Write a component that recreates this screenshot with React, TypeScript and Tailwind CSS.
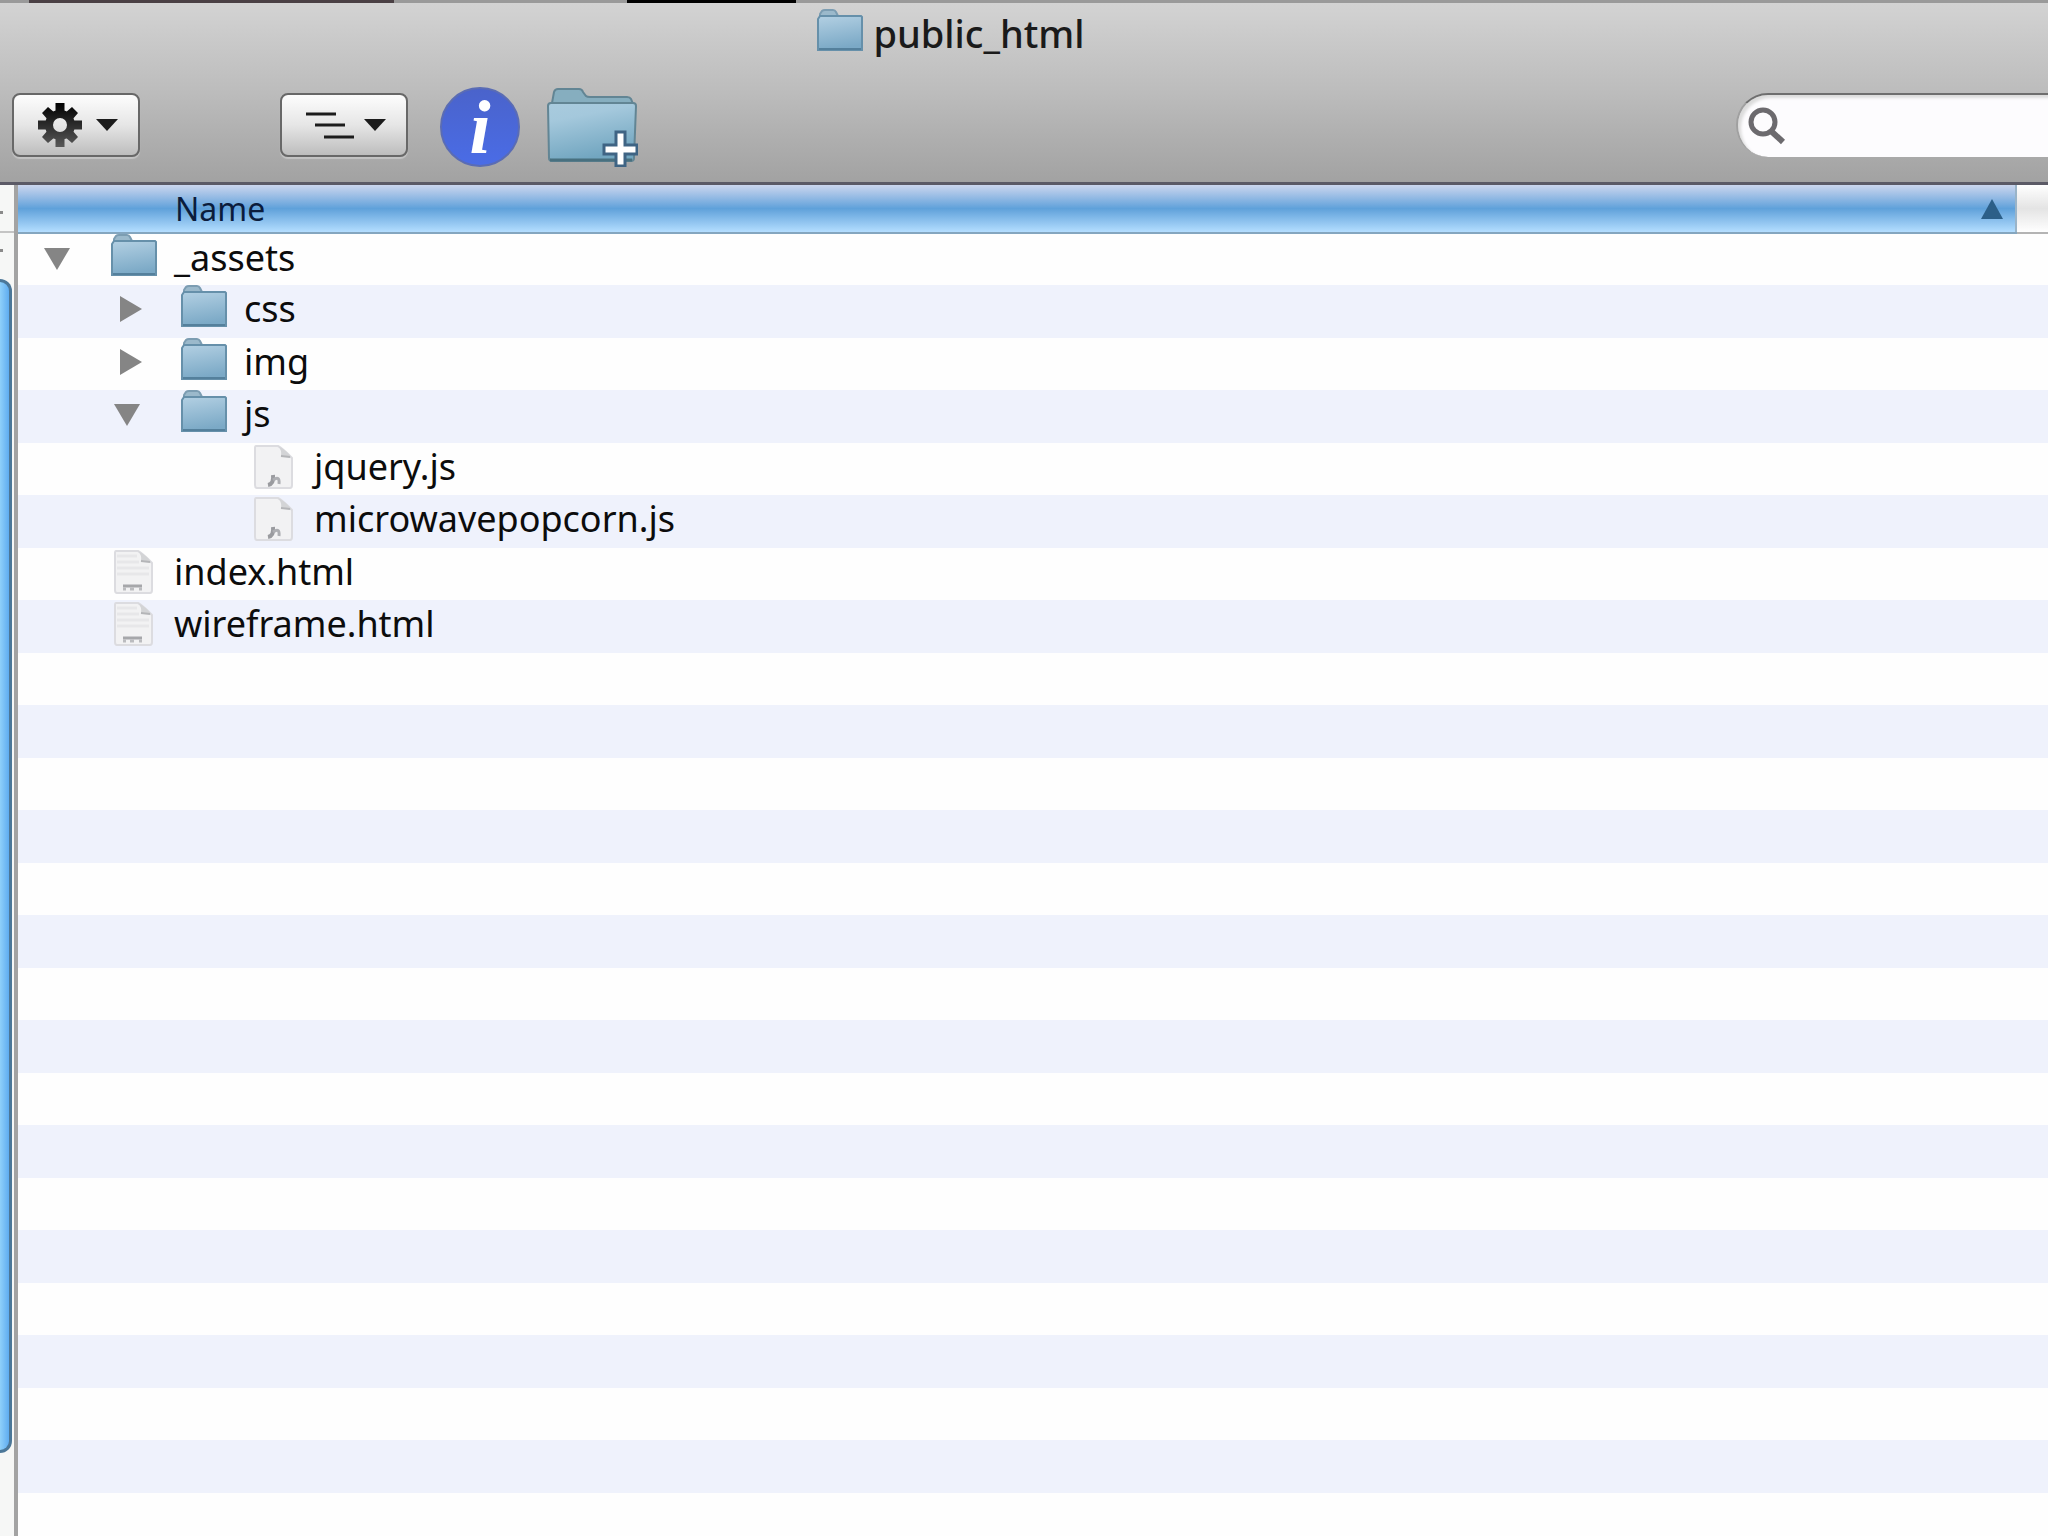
import { useState } from 'react'

type Entry = {
  id: string
  name: string
  kind: 'folder' | 'js' | 'html'
  depth: 0 | 1 | 2
  parent?: string
}

const ENTRIES: Entry[] = [
  { id: 'assets', name: '_assets', kind: 'folder', depth: 0 },
  { id: 'css', name: 'css', kind: 'folder', depth: 1, parent: 'assets' },
  { id: 'img', name: 'img', kind: 'folder', depth: 1, parent: 'assets' },
  { id: 'js', name: 'js', kind: 'folder', depth: 1, parent: 'assets' },
  { id: 'jquery', name: 'jquery.js', kind: 'js', depth: 2, parent: 'js' },
  { id: 'popcorn', name: 'microwavepopcorn.js', kind: 'js', depth: 2, parent: 'js' },
  { id: 'index', name: 'index.html', kind: 'html', depth: 0 },
  { id: 'wireframe', name: 'wireframe.html', kind: 'html', depth: 0 },
]

const ROW_COUNT = 24

const INDENT = ['pl-[26px]', 'pl-[96px]', 'pl-[166px]']

function FolderIcon() {
  return (
    <svg viewBox="0 0 46 42" className="h-[42px] w-[46px] shrink-0" aria-hidden="true">
      <defs>
        <linearGradient id="folder" x1="0" y1="0" x2="0.2" y2="1">
          <stop offset="0" stopColor="#b3d0e3" />
          <stop offset="1" stopColor="#7ba9c6" />
        </linearGradient>
      </defs>
      <path d="M3 9 V5 L5 2 Q6 1 8 1 H16 Q18 1 19 3 L21 7 V9 Z" fill="#9bb9cb" stroke="#7c9db2" strokeWidth="2" />
      <path d="M1 10 L3 7 H44 L45 8 V41 H1 Z" fill="url(#folder)" stroke="#6690aa" strokeWidth="2" />
      <path d="M2 40 H44" stroke="#54809c" strokeWidth="2" />
    </svg>
  )
}

function FileIcon({ kind }: { kind: 'js' | 'html' }) {
  return (
    <svg viewBox="0 0 46 46" className="h-[46px] w-[46px] shrink-0" aria-hidden="true">
      <path d="M5 3 H27 Q31 5 41 15 V42 Q41 45 39 45 H6 Q4 45 4 42 V5 Q4 3 5 3 Z" fill="#f2f2f3" stroke="#dcdce0" strokeWidth="2" />
      <path d="M27 3 Q31 7 30 13 Q37 12 41 16 Q37 8 27 3 Z" fill="#d3d4d6" />
      <path d="M30 13 L39 14" stroke="#b4b5b8" strokeWidth="2" />
      {kind === 'js' ? (
        <>
          <path d="M17 42 Q23 41 22 32" fill="none" stroke="#9a9b9f" strokeWidth="4" />
          <path d="M22 37 Q29 32 28 41" fill="none" stroke="#adaeb2" strokeWidth="3" />
        </>
      ) : (
        <>
          <path d="M6 8 H26 M6 14 H28 M6 20 H38 M6 26 H38" stroke="#e7e7e9" strokeWidth="3" />
          <path d="M12 38 H31" stroke="#a6a7aa" strokeWidth="3" />
          <path d="M12 41 H15 M19 41 H23 M28 41 H31" stroke="#bbbcbf" strokeWidth="3" />
        </>
      )}
    </svg>
  )
}

function NewFolderIcon() {
  return (
    <svg viewBox="0 0 92 80" className="h-[80px] w-[92px]" aria-hidden="true">
      <defs>
        <linearGradient id="newFolder" x1="0" y1="0" x2="0.3" y2="1">
          <stop offset="0" stopColor="#a9cbde" />
          <stop offset="0.3" stopColor="#a4c8dc" />
          <stop offset="1" stopColor="#72a6c0" />
        </linearGradient>
      </defs>
      <path d="M6 16 L8 5 Q9 2 12 2 H33 Q36 2 37 5 L40 9 Q41 10 44 10 H81 Q84 10 85 12 L87 17 H6 Z" fill="#86aebf" stroke="#628594" strokeWidth="2" />
      <path d="M2 19 Q2 16 5 16 H87 Q90 16 90 19 L88 71 Q88 74 85 74 H6 Q3 74 3 71 Z" fill="url(#newFolder)" stroke="#628594" strokeWidth="2" />
      <path d="M4 73 H86" stroke="#48707f" strokeWidth="3" />
      <path d="M70 45 H79 V58 H91 V67 H79 V79 H70 V67 H58 V58 H70 Z" fill="#fff" stroke="#3f6484" strokeWidth="3" />
    </svg>
  )
}

function GearIcon() {
  return (
    <svg viewBox="0 0 44 44" className="size-[44px]" aria-hidden="true">
      <defs>
        <linearGradient id="gear" x1="0" y1="0" x2="0" y2="44" gradientUnits="userSpaceOnUse">
          <stop offset="0" stopColor="#000" />
          <stop offset="1" stopColor="#585858" />
        </linearGradient>
      </defs>
      <circle cx="22" cy="22" r="11" fill="none" stroke="url(#gear)" strokeWidth="8" />
      <g fill="url(#gear)">
        <path d="M17.500 0 H26.500 V10 H17.500 Z M17.500 34 H26.500 V44 H17.500 Z M0 17.500 H10 V26.500 H0 Z M34 17.500 H44 V26.500 H34 Z" />
        <path d="M4 10 L10 4 L17 10 L10 17 Z M34 4 L40 10 L34 17 L27 10 Z M4 34 L10 27 L17 34 L10 40 Z M34 27 L40 34 L34 40 L27 34 Z" />
      </g>
    </svg>
  )
}

function Caret() {
  return (
    <svg viewBox="0 0 22 12" className="h-[12px] w-[22px]" aria-hidden="true">
      <path d="M0 0 H22 L11 12 Z" fill="#1c1c1c" />
    </svg>
  )
}

function Disclosure({ open, label, onToggle }: { open: boolean; label: string; onToggle: () => void }) {
  return (
    <button type="button" aria-expanded={open} aria-label={label} onClick={onToggle} className="w-7 shrink-0">
      <svg viewBox="0 0 28 28" className="size-7" aria-hidden="true">
        <path d={open ? 'M0 4 H26 L13 26 Z' : 'M6 1 V27 L28 14 Z'} fill="#858585" />
      </svg>
    </button>
  )
}

const toolButton =
  'flex h-16 w-32 items-center rounded-lg border-2 border-[#686868] bg-linear-to-b from-[#fdfdfd] via-[#e6e6e6] to-[#bdbdbd] shadow-[0_2px_1px_#c4c4c4]'

function Toolbar() {
  return (
    <header className="border-b-3 border-[#5b5a66] bg-linear-to-b from-[#d3d3d3] via-[#bcbcbc] to-[#a2a2a2]">
      <div className="flex h-[60px] items-center justify-center gap-2.5 pr-[146px]">
        <div className="mb-1.5">
          <FolderIcon />
        </div>
        <h1 className="text-[38px] leading-[52px] font-medium text-[#1a1a1a]">public_html</h1>
      </div>
      <div className="flex items-start pt-6 pb-[15px] pl-3">
        <button type="button" aria-label="Actions" className={`${toolButton} mt-1.5 mr-[140px] gap-3.5 pl-6`}>
          <GearIcon />
          <Caret />
        </button>
        <button type="button" aria-label="Arrange" className={`${toolButton} mt-1.5 mr-8 gap-2.5 pl-6`}>
          <svg viewBox="0 0 48 28" className="h-[28px] w-[48px]" aria-hidden="true">
            <path d="M0 3 H30 M9 14 H39 M18 26 H48" stroke="#1c1c1c" strokeWidth="3" />
          </svg>
          <Caret />
        </button>
        <button
          type="button"
          aria-label="Get info"
          className="mr-[26px] size-20 rounded-full border-2 border-[#5a6cb4] bg-linear-to-b from-[#4a63cb] to-[#4a6ce6] text-center font-['Liberation_Serif',serif] text-[76px] leading-[70px] font-bold text-white italic"
        >
          i
        </button>
        <button type="button" aria-label="New folder">
          <NewFolderIcon />
        </button>
        <div className="relative mt-1.5 ml-auto">
          <svg viewBox="0 0 38 38" className="absolute top-3.5 left-3 size-[38px]" aria-hidden="true">
            <circle cx="15" cy="15" r="12" fill="none" stroke="#6c6a6e" strokeWidth="5" />
            <path d="M23 24 L35 35" stroke="#6c6a6e" strokeWidth="6" />
          </svg>
          <input
            type="search"
            aria-label="Search"
            className="block h-16 w-[312px] rounded-l-full border-t-2 border-l-2 border-t-[#6e6e6e] border-l-[#a0a0a0] bg-[#fdfcfe] pl-16 text-[36px] shadow-[inset_3px_3px_3px_#dcdcdc] outline-none"
          />
        </div>
      </div>
    </header>
  )
}

// Edge of the neighbouring column with its aqua scroller
function ColumnEdge() {
  return (
    <div className="flex w-[18px] shrink-0 flex-col border-r-4 border-[#a3a3a3] bg-[#f6f7f6]">
      <div className="flex h-12 items-center border-b-2 border-[#c4c4c4] pt-2">
        <div className="h-[3px] w-[3px] bg-[#8a8a8a]" />
      </div>
      <div className="flex h-[46px] items-start pt-4">
        <div className="h-[3px] w-[3px] bg-[#8a8a8a]" />
      </div>
      <div className="mb-[83px] w-3 flex-1 rounded-r-xl border-y-3 border-r-3 border-[#4b7798] bg-linear-to-r from-[#8fd0fa] to-[#5eacf0]" />
    </div>
  )
}

export default function App() {
  const [open, setOpen] = useState<Record<string, boolean>>({ assets: true, js: true })

  function isVisible(entry: Entry): boolean {
    if (!entry.parent) return true
    const parent = ENTRIES.find(e => e.id === entry.parent)
    return !!open[entry.parent] && (!parent || isVisible(parent))
  }

  const visible = ENTRIES.filter(isVisible)
  const rows = Array.from({ length: ROW_COUNT }, (_, i) => visible[i])

  return (
    <div className="flex min-h-screen flex-col bg-[#fefefe] font-['Noto_Sans','Open_Sans',sans-serif] text-[#0c0c0c]">
      {/* Windows behind this one */}
      <div className="flex h-[3px] bg-[#9a9a9a]">
        <div className="ml-[29px] w-[365px] bg-[#4a4044]" />
        <div className="ml-[233px] w-[169px] bg-black" />
      </div>

      <Toolbar />

      <main className="flex flex-1">
        <ColumnEdge />
        <div className="flex-1">
          <table className="w-full table-fixed border-collapse">
            <colgroup>
              <col />
              <col className="w-8" />
            </colgroup>
            <thead>
              <tr className="h-12">
                <th
                  scope="col"
                  aria-sort="ascending"
                  className="border-b-2 border-[#84a6bf] bg-linear-to-b from-[#cbd6ee] via-[#5fa1da] to-[#b4deff] p-0 font-normal"
                >
                  <div className="flex h-11 items-center justify-between pr-3 pl-[157px] text-[32px] leading-[44px] text-[#0b1c3c]">
                    Name
                    <svg viewBox="0 0 22 20" className="h-[20px] w-[22px]" aria-hidden="true">
                      <path d="M11 0 L22 20 H0 Z" fill="#2c5f88" />
                    </svg>
                  </div>
                </th>
                <td className="border-b-2 border-l-2 border-b-[#b4b4b4] border-l-[#9ab4c8] bg-linear-to-b from-white via-[#e4e4e4] to-white" />
              </tr>
            </thead>
            <tbody>
              {rows.map((entry, i) => (
                <tr key={i} className={i % 2 ? 'h-[53px] bg-[#eff2fc]' : 'h-[52px] bg-[#fefefe]'}>
                  <td colSpan={2} className="p-0 align-top">
                    {entry && (
                      <div className={`flex h-12 items-center ${INDENT[entry.depth]}`}>
                        {entry.kind === 'folder' ? (
                          <Disclosure
                            open={!!open[entry.id]}
                            label={`Toggle ${entry.name}`}
                            onToggle={() => setOpen({ ...open, [entry.id]: !open[entry.id] })}
                          />
                        ) : (
                          <div className="w-7 shrink-0" />
                        )}
                        <div className="mr-[17px] ml-[39px] self-start">
                          {entry.kind === 'folder' ? <FolderIcon /> : <FileIcon kind={entry.kind} />}
                        </div>
                        <span className="text-[36px] leading-[48px] whitespace-nowrap">{entry.name}</span>
                      </div>
                    )}
                  </td>
                </tr>
              ))}
            </tbody>
          </table>
        </div>
      </main>
    </div>
  )
}
